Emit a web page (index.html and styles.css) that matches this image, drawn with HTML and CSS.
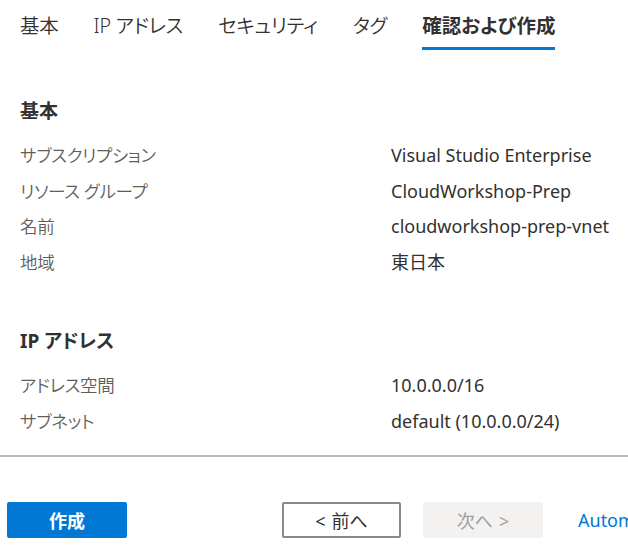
FILE: index.html
```html
<!DOCTYPE html>
<html lang="ja">
<head>
<meta charset="utf-8">
<link rel="stylesheet" href="styles.css">
</head>
<body>
<div class="page">
  <nav class="tabs">
    <span class="tab">基本</span>
    <span class="tab">IP アドレス</span>
    <span class="tab">セキュリティ</span>
    <span class="tab">タグ</span>
    <span class="tab active">確認および作成</span>
  </nav>

  <section class="section first">
    <h2 class="heading">基本</h2>
    <div class="grid">
      <div class="label">サブスクリプション</div><div class="value">Visual Studio Enterprise</div>
      <div class="label">リソース グループ</div><div class="value">CloudWorkshop-Prep</div>
      <div class="label">名前</div><div class="value">cloudworkshop-prep-vnet</div>
      <div class="label">地域</div><div class="value">東日本</div>
    </div>
  </section>

  <section class="section second">
    <h2 class="heading">IP アドレス</h2>
    <div class="grid">
      <div class="label">アドレス空間</div><div class="value">10.0.0.0/16</div>
      <div class="label">サブネット</div><div class="value">default (10.0.0.0/24)</div>
    </div>
  </section>

  <div class="divider"></div>

  <footer class="footer">
    <button class="btn primary">作成</button>
    <button class="btn outline"><span class="arrow-l">&lt;</span>前へ</button>
    <button class="btn disabled">次へ<span class="arrow-r">&gt;</span></button>
    <a class="link">Autom</a>
  </footer>
</div>
</body>
</html>
```

FILE: styles.css
```css
html, body {
  margin: 0;
  padding: 0;
  background: #ffffff;
}
body {
  font-family: "Noto Sans", "Noto Sans CJK JP", sans-serif;
  font-feature-settings: "palt";
  color: #323130;
  width: 628px;
  height: 556px;
  overflow: hidden;
}
.page {
  width: 628px;
  overflow: hidden;
}
.tabs {
  display: flex;
  gap: 35px;
  padding-left: 20px;
  white-space: nowrap;
}
.tab {
  flex: none;
  font-size: 19.5px;
  letter-spacing: -0.2px;
  line-height: 30px;
  padding: 11px 0 6px;
  border-bottom: 3px solid transparent;
  color: #323130;
  font-weight: 350;
}
.tab.active {
  font-weight: 700;
  letter-spacing: 0;
  border-bottom-color: #0078d4;
}
.section {
  padding-left: 20px;
}
.section.first {
  margin-top: 43px;
}
.section.second {
  margin-top: 43px;
}
.heading {
  margin: 0 0 9px;
  font-size: 19px;
  font-weight: 700;
  line-height: 36px;
  color: #323130;
}
.grid {
  display: grid;
  grid-template-columns: 371px 1fr;
  white-space: nowrap;
}
.label, .value {
  line-height: 35.6px;
}
.label {
  font-size: 17.5px;
  font-weight: 350;
  letter-spacing: -0.3px;
  color: #605e5c;
}
.value {
  font-size: 18px;
  font-weight: 400;
  color: #323130;
}
.divider {
  margin-top: 15px;
  height: 2px;
  background: #b9b9b9;
}
.footer {
  display: flex;
  align-items: center;
  margin-top: 45px;
  padding-left: 7px;
  white-space: nowrap;
}
.btn {
  flex: none;
  font-family: inherit;
  font-feature-settings: "palt";
  height: 36px;
  width: 120px;
  border-radius: 2px;
  font-size: 18px;
  padding: 0;
  box-sizing: border-box;
}
.arrow-l {
  margin-right: 6px;
}
.arrow-r {
  margin-left: 6px;
}
.btn.primary {
  background: #0078d4;
  border: none;
  color: #ffffff;
  font-weight: 700;
}
.btn.outline {
  margin-left: 155px;
  width: 119px;
  background: #ffffff;
  border: 2px solid #8a8886;
  color: #323130;
}
.btn.disabled {
  margin-left: 22px;
  background: #f3f2f1;
  border: none;
  color: #a19f9d;
}
.link {
  flex: none;
  margin-left: 35px;
  font-size: 18px;
  color: #0078d4;
}
```
